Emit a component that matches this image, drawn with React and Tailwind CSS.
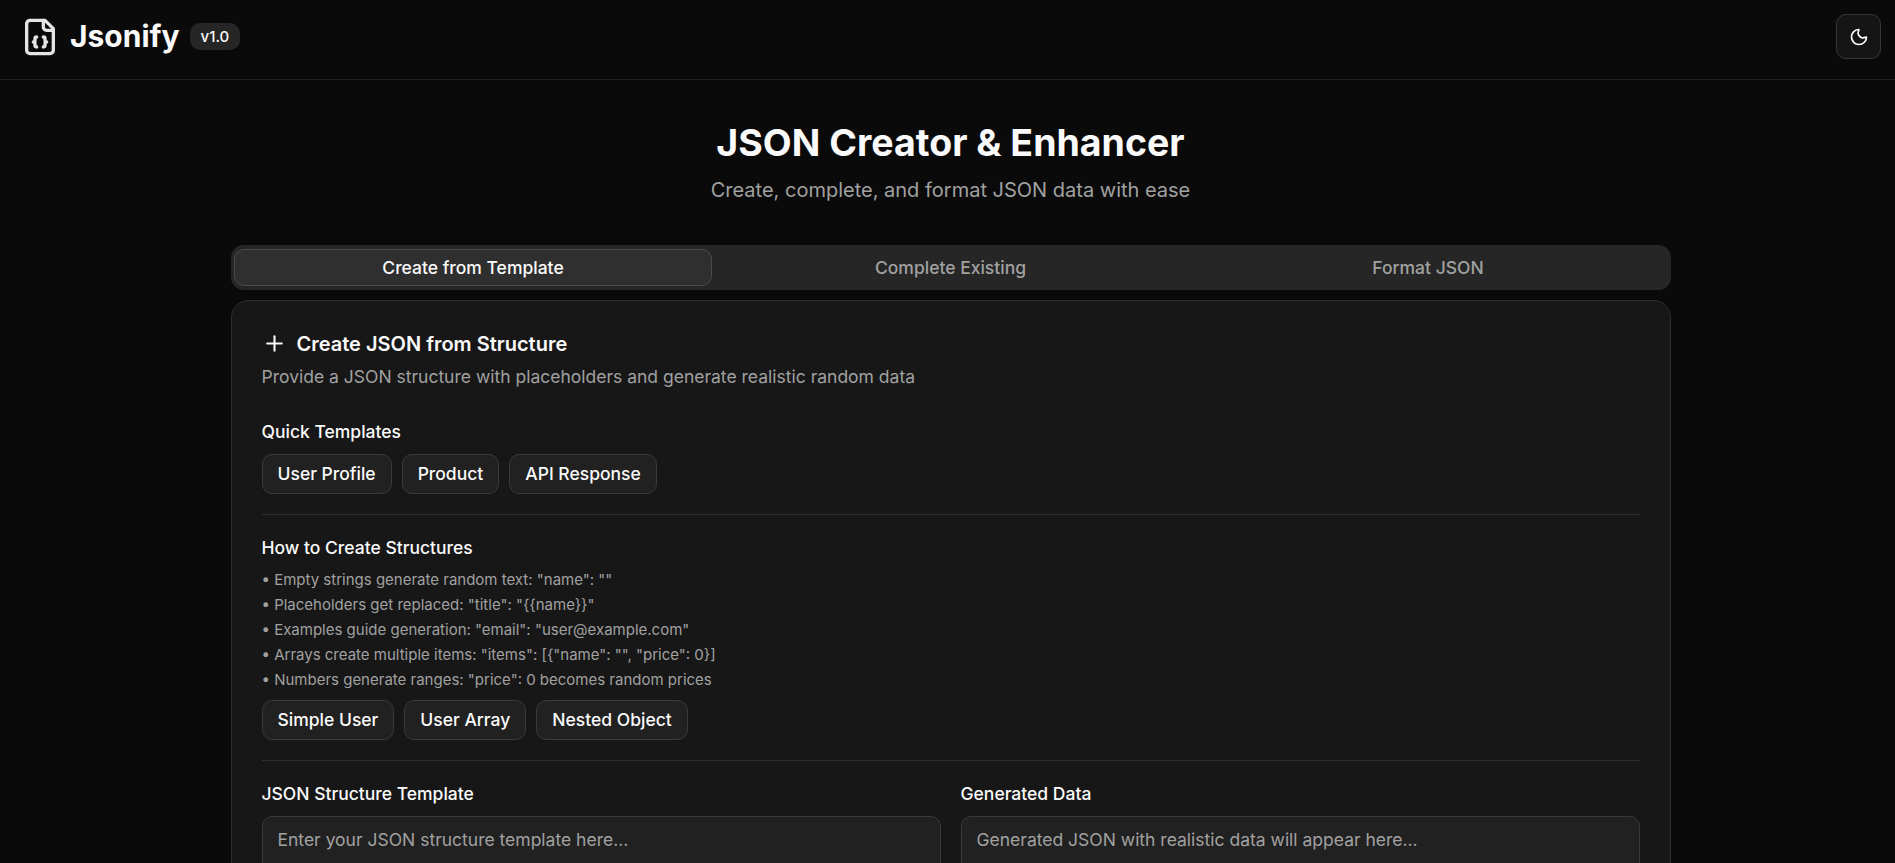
import { Moon, Plus } from "lucide-react";

const tabs = ["Create from Template", "Complete Existing", "Format JSON"];

const quickTemplates = ["User Profile", "Product", "API Response"];

const tips = [
  'Empty strings generate random text: "name": ""',
  'Placeholders get replaced: "title": "{{name}}"',
  'Examples guide generation: "email": "user@example.com"',
  'Arrays create multiple items: "items": [{"name": "", "price": 0}]',
  'Numbers generate ranges: "price": 0 becomes random prices',
];

const examples = ["Simple User", "User Array", "Nested Object"];

function JsonFileIcon({ className }) {
  return (
    <svg
      viewBox="0 0 24 24"
      fill="none"
      stroke="currentColor"
      strokeWidth="2"
      strokeLinecap="round"
      strokeLinejoin="round"
      className={className}
    >
      <path d="M15 2H6a2 2 0 0 0-2 2v16a2 2 0 0 0 2 2h12a2 2 0 0 0 2-2V7Z" />
      <path d="M14 2v4a2 2 0 0 0 2 2h4" />
      <path d="M10 12a1 1 0 0 0-1 1v1a1 1 0 0 1-1 1 1 1 0 0 1 1 1v1a1 1 0 0 0 1 1" />
      <path d="M14 18a1 1 0 0 0 1-1v-1a1 1 0 0 1 1-1 1 1 0 0 1-1-1v-1a1 1 0 0 0-1-1" />
    </svg>
  );
}

function OutlineButton({ children }) {
  return (
    <button className="flex h-10 items-center justify-center rounded-[10px] border border-[#3a3a3a] bg-[#212121] px-[15px] pb-px text-[17.5px] leading-[25px] font-medium whitespace-nowrap">
      {children}
    </button>
  );
}

function Label({ children }) {
  return <h3 className="text-[17.5px] leading-[25px] font-medium">{children}</h3>;
}

function Divider() {
  return <div className="h-px w-full shrink-0 bg-[#2e2e2e]" />;
}

function Editor({ label, placeholder }) {
  return (
    <div className="flex flex-col gap-2.5">
      <Label>{label}</Label>
      <textarea
        placeholder={placeholder}
        className="h-[500px] w-full resize-none rounded-[10px] border border-[#3a3a3a] bg-[#212121] px-[15px] py-2.5 text-[17.5px] leading-[25px] outline-none placeholder:text-[#a1a1a1]"
      />
    </div>
  );
}

function Header() {
  return (
    <header className="flex h-20 items-start justify-between border-b border-[#222222] px-5 pt-[14px]">
      <div className="flex h-[45px] items-center gap-2.5">
        <JsonFileIcon className="size-10 text-[#e5e5e5]" />
        <span className="pb-0.5 text-[30px] leading-10 font-bold">Jsonify</span>
        <span className="flex h-[27px] items-center rounded-[10px] bg-[#262626] px-[11px] text-[15px] leading-5 font-medium">
          v1.0
        </span>
      </div>
      <button className="flex size-[45px] items-center justify-center rounded-[10px] border border-[#363636] bg-[#151515]">
        <Moon className="size-5" />
      </button>
    </header>
  );
}

export default function App() {
  return (
    <div className="h-[863px] w-full overflow-hidden bg-[#0a0a0a] font-['Inter',sans-serif] text-[#fafafa]">
      <div className="w-[1901px]">
        <Header />
        <main className="mx-auto w-[1440px] pt-10">
          <div className="flex flex-col items-center gap-2.5">
            <h1 className="text-[37.5px] leading-[45px] font-bold">JSON Creator &amp; Enhancer</h1>
            <p className="text-xl leading-[30px] text-[#a1a1a1]">
              Create, complete, and format JSON data with ease
            </p>
          </div>

          <div className="mt-10 grid h-[45px] grid-cols-3 items-center rounded-[12.5px] bg-[#262626] px-[3.75px]">
            {tabs.map((tab, i) => (
              <button
                key={tab}
                className={
                  i === 0
                    ? "h-[37px] rounded-[10px] border border-[#4a4a4a] bg-[#2f2f2f] text-[17.5px] leading-[25px] font-medium"
                    : "h-[37px] rounded-[10px] border border-transparent text-[17.5px] leading-[25px] font-medium text-[#a1a1a1]"
                }
              >
                {tab}
              </button>
            ))}
          </div>

          <section className="mt-2.5 flex flex-col rounded-[17.5px] border border-[#2e2e2e] bg-[#171717] p-[30px]">
            <div className="flex h-[25px] items-center gap-2.5">
              <Plus className="size-[25px]" />
              <h2 className="pt-0.5 text-xl leading-[25px] font-semibold">
                Create JSON from Structure
              </h2>
            </div>
            <p className="mt-[7.5px] text-[17.5px] leading-[25px] text-[#a1a1a1]">
              Provide a JSON structure with placeholders and generate realistic random data
            </p>

            <div className="mt-[30.5px] flex flex-col gap-5">
              <div className="flex flex-col gap-2.5">
                <Label>Quick Templates</Label>
                <div className="flex gap-2.5">
                  {quickTemplates.map((t) => (
                    <OutlineButton key={t}>{t}</OutlineButton>
                  ))}
                </div>
              </div>

              <Divider />

              <div className="flex flex-col gap-2.5">
                <Label>How to Create Structures</Label>
                <div className="flex flex-col gap-[5px] text-[15px] leading-5 text-[#a1a1a1]">
                  {tips.map((tip) => (
                    <p key={tip}>• {tip}</p>
                  ))}
                </div>
                <div className="flex gap-2.5">
                  {examples.map((t) => (
                    <OutlineButton key={t}>{t}</OutlineButton>
                  ))}
                </div>
              </div>

              <Divider />

              <div className="grid grid-cols-2 gap-5">
                <Editor
                  label="JSON Structure Template"
                  placeholder="Enter your JSON structure template here..."
                />
                <Editor
                  label="Generated Data"
                  placeholder="Generated JSON with realistic data will appear here..."
                />
              </div>
            </div>
          </section>
        </main>
      </div>
    </div>
  );
}
